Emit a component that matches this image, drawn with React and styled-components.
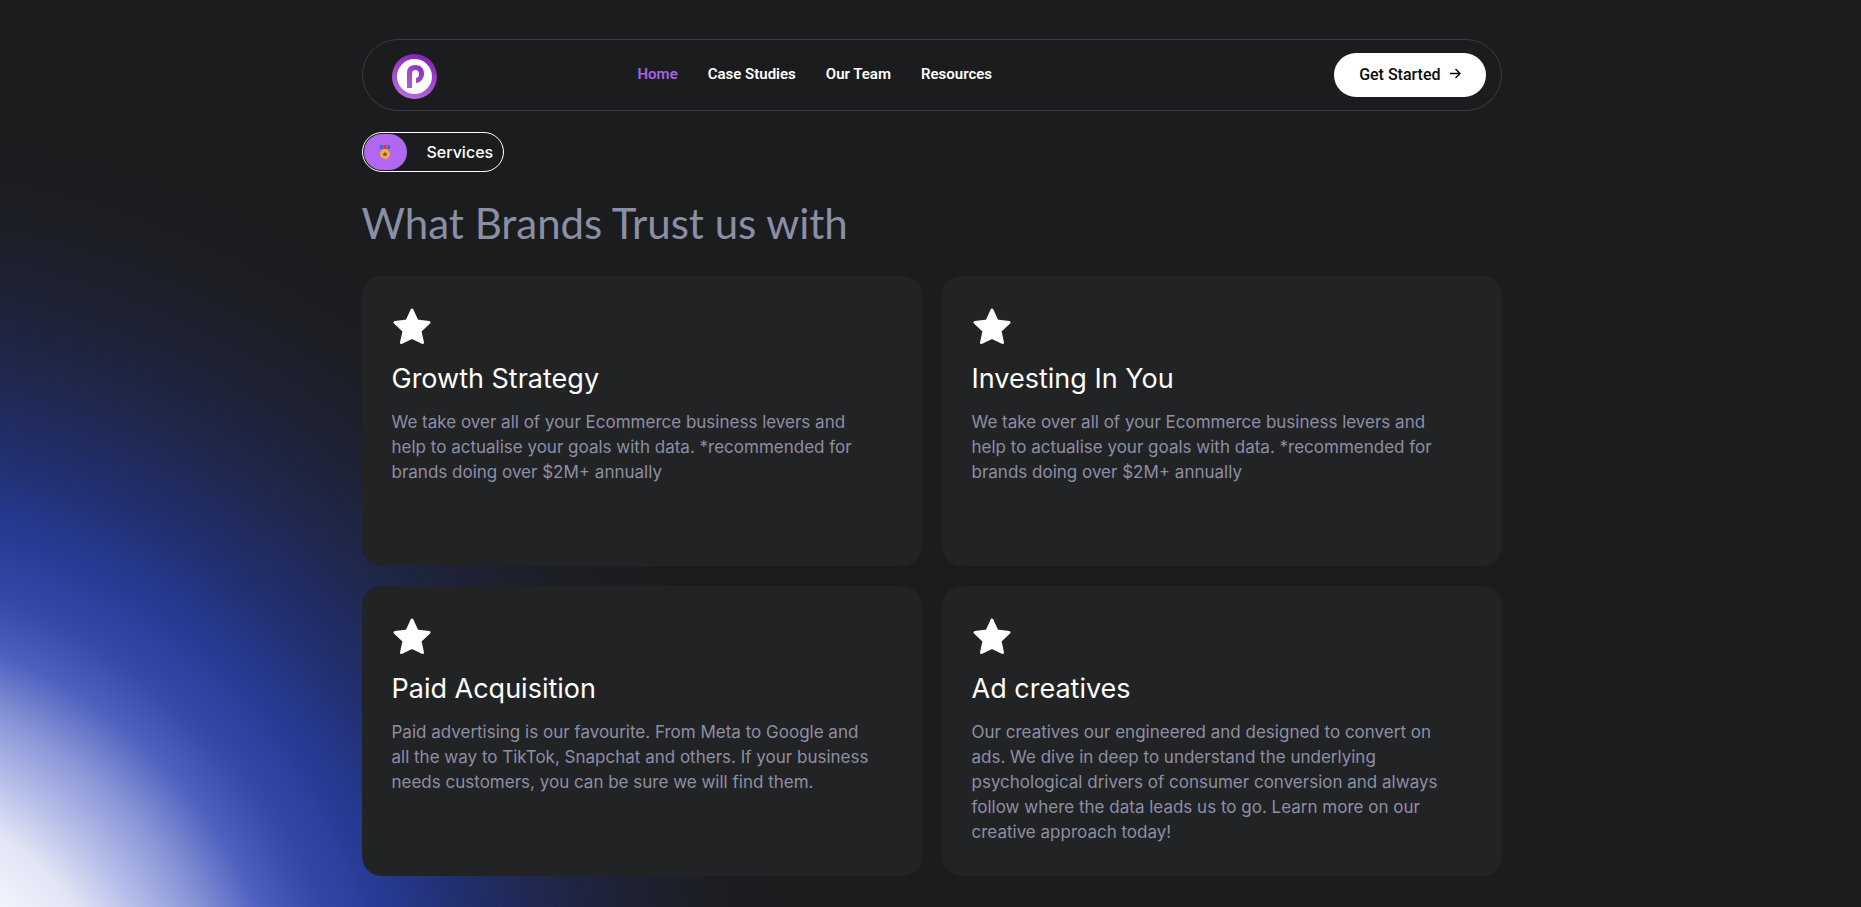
import React from 'react'
import styled, { createGlobalStyle } from 'styled-components'

const GlobalStyle = createGlobalStyle`
  * {
    box-sizing: border-box;
  }

  body {
    margin: 0;
    background: #1b1c1e;
    color: white;
    font-family: Inter, sans-serif;
  }
`

const Page = styled.div`
  min-height: 100vh;
  padding: 39px 16px 24px 18px;
  background: radial-gradient(
    circle 980px at -170px calc(100% + 180px),
    #f4f6fd 240px,
    #e2e5f5 304px,
    #b6bfe9 352px,
    #8894d7 408px,
    #4f61be 464px,
    #3449a8 516px,
    #273b95 580px,
    #222f70 652px,
    #1f274a 744px,
    #1e2132 824px,
    #1c1e22 904px,
    #1b1c1e 980px
  );
`

const Content = styled.div`
  margin: 0 auto;
  max-width: 1140px;
`

const Header = styled.header`
  display: grid;
  grid-template-columns: 246px 1fr auto;
  align-items: center;
  height: 72px;
  padding: 0 15px 0 29px;
  border: 1px solid #3a3c45;
  border-radius: 36px;
`

const LogoLink = styled.a`
  display: flex;
  width: fit-content;
  padding-top: 2px;
`

const Menu = styled.nav`
  display: flex;
  gap: 30px;
  padding-bottom: 2px;
`

const MenuLink = styled.a`
  color: ${props => (props.$active ? '#a862e2' : 'white')};
  font: 600 15px/20px Roboto, sans-serif;
  text-decoration: none;
`

const CallToAction = styled.button`
  display: flex;
  align-items: center;
  gap: 8px;
  height: 44px;
  padding: 0 25px;
  border: 0;
  border-radius: 22px;
  background: white;
  color: #0b0b0d;
  font: 500 16px/24px Roboto, sans-serif;

  svg {
    margin-bottom: 2px;
  }
`

const Tag = styled.div`
  display: flex;
  align-items: center;
  gap: 20px;
  width: fit-content;
  height: 40px;
  margin-top: 21px;
  padding: 0 10px 0 1px;
  border: 1px solid white;
  border-radius: 20px;
  font-size: 16px;
  font-weight: 500;
`

const TagIcon = styled.span`
  display: flex;
  align-items: center;
  justify-content: center;
  width: 43px;
  height: 36px;
  border-radius: 18px;
  background: #b366ef;
`

const Title = styled.h1`
  margin: 23px 0 25px;
  color: #8a8fa6;
  font: 400 42px/56px Lato, sans-serif;
`

const Cards = styled.div`
  display: grid;
  grid-template-columns: repeat(auto-fit, minmax(400px, 1fr));
  grid-auto-rows: minmax(290px, auto);
  gap: 20px;
`

const Card = styled.article`
  padding: 30px;
  border-radius: 20px;
  background: #222325;

  svg {
    display: block;
  }
`

const CardTitle = styled.h2`
  margin: 15px 0 13px;
  font-size: 27px;
  font-weight: 400;
  line-height: 36px;
`

const CardText = styled.p`
  margin: 0;
  max-width: 484px;
  color: #8d8fa5;
  font-size: 17px;
  line-height: 25px;
`

const Logo = () => (
  <svg width="45" height="45" viewBox="0 0 45 45" role="img" aria-label="P">
    <defs>
      <linearGradient id="ring" x1="0.7" y1="0" x2="0.3" y2="1">
        <stop offset="0" stopColor="#8320b5" />
        <stop offset="1" stopColor="#bb6ce0" />
      </linearGradient>
      <linearGradient id="stem" x1="0" y1="1" x2="1" y2="0">
        <stop offset="0" stopColor="#b05fdc" />
        <stop offset="1" stopColor="#8a2abc" />
      </linearGradient>
    </defs>
    <circle cx="22.5" cy="22.5" r="22.5" fill="url(#ring)" />
    <circle cx="22.5" cy="22.5" r="17.5" fill="white" />
    <path
      d="M15 34V18.5C15 14 18 11 23.5 11C28.5 11 32 14.5 32 19.5C32 24.5 29 28.5 24 29V24C26 23.5 27 22 27 20C27 17.5 25.5 16 23.5 16C21 16 20 17.5 20 20V34Z"
      fill="url(#stem)"
    />
  </svg>
)

const Arrow = () => (
  <svg width="12" height="12" viewBox="0 0 12 12" fill="none" aria-hidden="true">
    <path d="M1 5.5H11M6.5 1L11 5.5L6.5 10" stroke="currentColor" strokeWidth="1.5" />
  </svg>
)

const Medal = () => (
  <svg width="12" height="14" viewBox="0 0 12 14" aria-hidden="true">
    <path d="M1 0H3.7V5L1 3.5Z" fill="#2a6fc4" />
    <path d="M11 0H8.3V5L11 3.5Z" fill="#2a6fc4" />
    <path d="M4.5 0H7.5V4H4.5Z" fill="#d8344a" />
    <circle cx="6" cy="9" r="5" fill="#f7ae3d" />
    <path
      d="M6 6.5L6.8 8.2L8.6 8.4L7.3 9.7L7.6 11.5L6 10.6L4.4 11.5L4.7 9.7L3.4 8.4L5.2 8.2Z"
      fill="#7a4a22"
    />
  </svg>
)

const Star = () => (
  <svg width="40" height="40" viewBox="0 0 40 40" aria-hidden="true">
    <path
      d="M20 4L25 15L37 16.5L28 25L30.5 36.5L20 31.5L9.5 36.5L12 25L3 16.5L15 15Z"
      fill="white"
      stroke="white"
      strokeWidth="3"
      strokeLinejoin="round"
    />
  </svg>
)

const menu = ['Home', 'Case Studies', 'Our Team', 'Resources']

const services = [
  {
    title: 'Growth Strategy',
    text:
      'We take over all of your Ecommerce business levers and help to actualise your goals with data. *recommended for brands doing over $2M+ annually',
  },
  {
    title: 'Investing In You',
    text:
      'We take over all of your Ecommerce business levers and help to actualise your goals with data. *recommended for brands doing over $2M+ annually',
  },
  {
    title: 'Paid Acquisition',
    text:
      'Paid advertising is our favourite. From Meta to Google and all the way to TikTok, Snapchat and others. If your business needs customers, you can be sure we will find them.',
  },
  {
    title: 'Ad creatives',
    text:
      'Our creatives our engineered and designed to convert on ads. We dive in deep to understand the underlying psychological drivers of consumer conversion and always follow where the data leads us to go. Learn more on our creative approach today!',
  },
]

const App = () => (
  <Page>
    <GlobalStyle />
    <Content>
      <Header>
        <LogoLink href="#">
          <Logo />
        </LogoLink>
        <Menu>
          {menu.map((name, i) => (
            <MenuLink key={name} href="#" $active={i === 0}>
              {name}
            </MenuLink>
          ))}
        </Menu>
        <CallToAction type="button">
          Get Started
          <Arrow />
        </CallToAction>
      </Header>
      <main>
        <Tag>
          <TagIcon>
            <Medal />
          </TagIcon>
          Services
        </Tag>
        <Title>What Brands Trust us with</Title>
        <Cards>
          {services.map(({ title, text }) => (
            <Card key={title}>
              <Star />
              <CardTitle>{title}</CardTitle>
              <CardText>{text}</CardText>
            </Card>
          ))}
        </Cards>
      </main>
    </Content>
  </Page>
)

export default App
